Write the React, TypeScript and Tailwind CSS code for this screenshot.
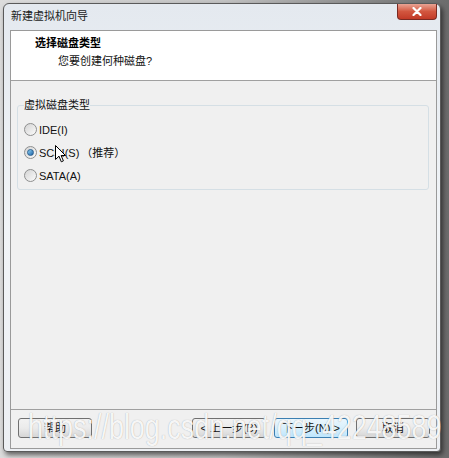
import React from 'react';

const font = { fontFamily: '"Liberation Sans", "Noto Sans CJK SC", sans-serif' };

function Radio({ label, extra, checked }: { label: string; extra?: string; checked?: boolean }) {
  return (
    <div className="flex h-[23px] items-center pl-[6px]">
      <span className="flex h-[13px] w-[13px] items-center justify-center rounded-full border border-[#8e8f8f] bg-gradient-to-br from-[#d4d4d4] to-[#fbfbfb]">
        {checked && (
          <span className="h-[7px] w-[7px] rounded-full border border-[#2a5f8f] bg-gradient-to-br from-[#8fd3f5] to-[#1a62a6]" />
        )}
      </span>
      <span className="ml-[2px] text-[11px] leading-[14px] text-[#111]">{label}</span>
      {extra && <span className="ml-[2px] text-[11px] leading-[14px] text-[#111]">{extra}</span>}
    </div>
  );
}

function Btn({ children, primary }: { children: React.ReactNode; primary?: boolean }) {
  return (
    <div
      className={`flex h-[20px] w-[74px] items-center justify-center rounded-[3px] border text-[11px] text-[#111] ${
        primary
          ? 'border-[#3c7fb1] bg-gradient-to-b from-[#eaf6fd] via-[#d9f0fc] to-[#bee6fd]'
          : 'border-[#707070] bg-gradient-to-b from-[#f2f2f2] via-[#ebebeb] to-[#d6d6d6]'
      }`}
    >
      {children}
    </div>
  );
}

export default function App() {
  return (
    <div
      className="relative h-[458px] w-[449px] overflow-hidden bg-gradient-to-r from-[#dcdcdc] via-[#c2c2c2] to-[#6c6c6c] pb-[6px] pl-[3px] pr-[8px] pt-[3px]"
      style={font}
    >
      <div className="flex h-[449px] w-[438px] flex-col rounded-t-[6px] rounded-b-[4px] border border-[#5a5a5a] bg-gradient-to-b from-[#e4e9ef] via-[#f1f4f7] to-[#eceff3] shadow-[2px_3px_5px_rgba(0,0,0,0.55)]">
        {/* title bar */}
        <div className="flex h-[26px] items-start justify-between">
          <span className="mt-[5px] pl-[7px] text-[11px] leading-[14px] text-[#1a1a1a]">新建虚拟机向导</span>
          <div className="mr-[3px] flex h-[16px] w-[40px] items-center justify-center rounded-b-[4px] border border-t-0 border-[#7a2a22] bg-gradient-to-b from-[#e8a394] via-[#d2563f] to-[#c23a27]">
            <svg width="10" height="9" viewBox="0 0 10 9">
              <path d="M1.5 1 L8.5 8 M8.5 1 L1.5 8" stroke="#fff" strokeWidth="2.2" strokeLinecap="round" />
            </svg>
          </div>
        </div>

        {/* client */}
        <div className="mb-[2px] ml-[6px] mr-[3px] flex flex-1 flex-col border border-[#9a9a9a] bg-[#f0f0f0]">
          <div className="h-[50px] border-b border-[#a0a0a0] bg-white pt-[5px]">
            <div className="pl-[24px] text-[11px] font-bold leading-[14px] text-black">选择磁盘类型</div>
            <div className="mt-[4px] pl-[47px] text-[11px] leading-[14px] text-[#111]">您要创建何种磁盘?</div>
          </div>

          <div className="flex-1 px-[6px] pr-[7px] pt-[17px]">
            <fieldset className="rounded-[3px] border border-[#d5dfe5] pb-[2px]">
              <legend className="ml-[6px] text-[11px] leading-[14px] text-[#111]">虚拟磁盘类型</legend>
              <div className="pt-[6px]">
                <Radio label="IDE(I)" />
                <Radio label="SCSI(S)" extra="（推荐）" checked />
                <Radio label="SATA(A)" />
              </div>
            </fieldset>
          </div>

          <div className="flex items-start justify-between border-t border-[#a0a0a0] pb-[10px] pl-[7px] pr-[6px] pt-[8px]">
            <Btn>帮助</Btn>
            <div className="flex gap-[8px]">
              <Btn>&lt; 上一步(B)</Btn>
              <Btn primary>下一步(N) &gt;</Btn>
              <Btn>取消</Btn>
            </div>
          </div>
        </div>
      </div>

      {/* mouse cursor */}
      <svg className="absolute left-[55px] top-[145px]" width="11" height="18" viewBox="0 0 11 18">
        <path d="M0.5 0.5 L0.5 14.5 L4 11.2 L6.3 16.8 L8.4 15.9 L6.1 10.5 L10.5 10.5 Z" fill="#fff" stroke="#000" strokeWidth="1" strokeLinejoin="round" />
      </svg>

      {/* watermark */}
      <div
        className="pointer-events-none absolute left-[28px] top-[409px] origin-left scale-x-[0.77] whitespace-nowrap text-[35px] leading-[35px] text-white/90 [text-shadow:0_0_1px_rgba(0,0,0,0.35)]"
        style={{ fontFamily: '"Liberation Sans", sans-serif' }}
      >
        https://blog.csdn.net/qq_42248589
      </div>
    </div>
  );
}
